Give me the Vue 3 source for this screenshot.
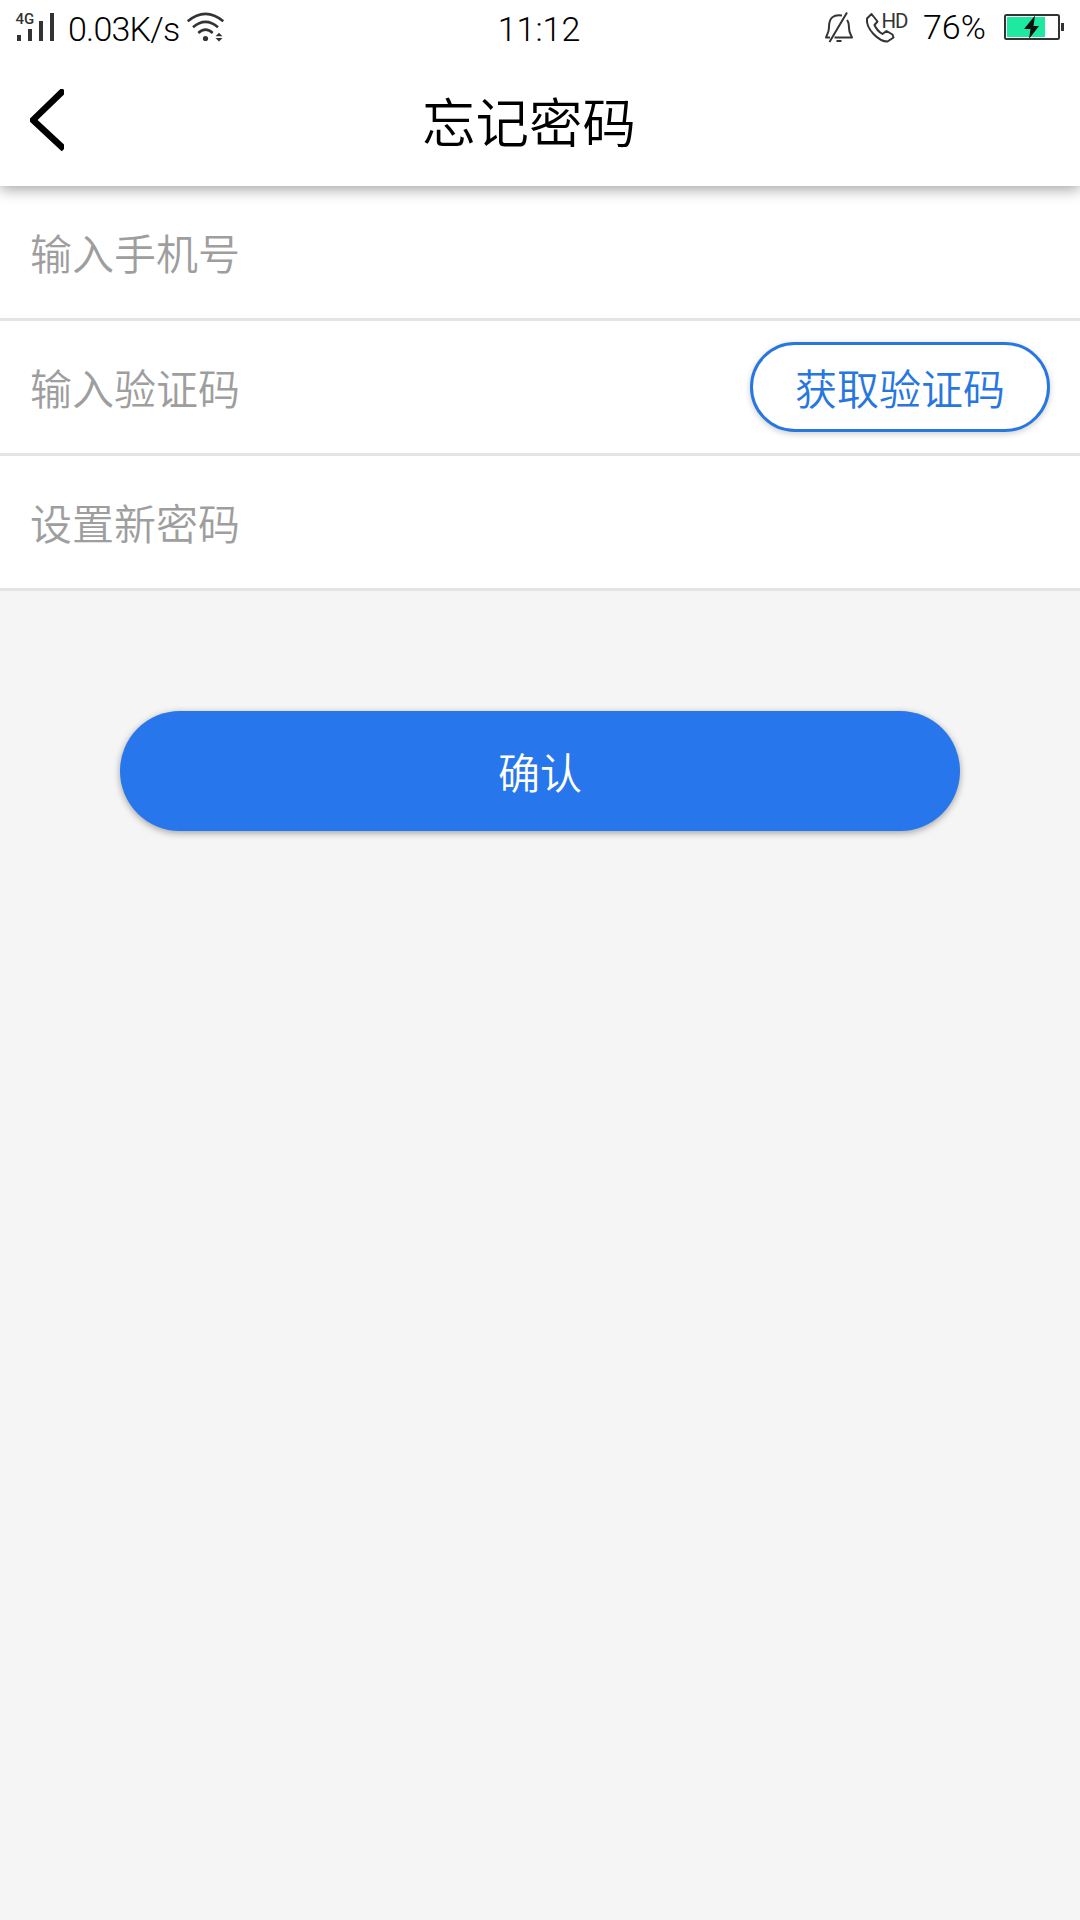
<script setup>
import { ref } from 'vue'

const phone = ref('')
const code = ref('')
const password = ref('')
</script>

<template>
  <div class="page">
    <header class="header">
      <div class="status-bar">
        <div class="status-left">
          <svg class="icon" width="44" height="60" viewBox="14 0 44 60">
            <text x="15.5" y="23.5" class="tiny network">4G</text>
            <path d="M17 35h4v6h-4zM28 29h4v12h-4zM39 21h4v20h-4zM50 13h4v28h-4z" fill="#333" />
          </svg>
          <span class="speed">0.03K/s</span>
          <svg class="icon" width="40" height="60" viewBox="186 0 40 60">
            <g fill="none" stroke="#333" stroke-width="2.5">
              <path d="M187.700 21.300Q205.500 6.500 223.300 21.300" />
              <path d="M193 27.200Q205.500 16.500 218 27.200" />
              <path d="M198.300 33Q205.500 26.300 212.700 33" />
            </g>
            <circle cx="205.500" cy="38.500" r="2.600" fill="#333" />
            <path d="M215.500 36.200l3.500-3.500 3.500 3.500zM215.500 38l3.500 3.500 3.500-3.500z" fill="#333" />
          </svg>
        </div>
        <span class="time">11:12</span>
        <div class="status-right">
          <svg class="icon" width="100" height="60" viewBox="820 0 100 60">
            <g fill="none" stroke="#333" stroke-width="2" stroke-linejoin="round">
              <path d="M842 15.500Q829 13.500 829 27C829 32 827.500 33.500 826 37.500H830" />
              <path d="M847 20Q849 22.500 849 28C849 32.500 850.500 34 852 37.500H834.500" />
              <path d="M829.500 42L847 12.500M836.500 41h5" />
              <path d="M871.500 14L867 18.500C865.500 29 879 41.500 887.500 41.500L893.500 37.500 892.500 34.500 886.500 31 882.500 34C879 32 876 28.500 874.500 25L877.500 21.500Z" />
            </g>
            <text x="881.5" y="27.500" class="tiny hd">HD</text>
          </svg>
          <span class="percent">76%</span>
          <svg class="icon" width="62" height="60" viewBox="1002 0 62 60">
            <rect x="1005" y="15" width="54" height="24" rx="1.500" fill="#fff" stroke="#333" stroke-width="2" />
            <path d="M1007 17h38v20h-38z" fill="#1de9a0" />
            <path d="M1035 15.500L1024 29H1030.500L1029 39 1039 26H1033.500Z" fill="#111" />
            <path d="M1061 23h3v8h-3z" fill="#333" />
          </svg>
        </div>
      </div>
      <div class="nav">
        <svg class="back" width="34" height="62" viewBox="0 0 34 62">
          <path d="M34 1L3 31l31 29" fill="none" stroke="#000" stroke-width="6.500" />
        </svg>
        <h1 class="title">忘记密码</h1>
      </div>
    </header>

    <main>
      <div class="row">
        <input v-model="phone" type="tel" placeholder="输入手机号" />
      </div>
      <div class="row">
        <input v-model="code" type="text" placeholder="输入验证码" />
        <button class="code-btn">获取验证码</button>
      </div>
      <div class="row">
        <input v-model="password" type="password" placeholder="设置新密码" />
      </div>
      <button class="confirm-btn">确认</button>
    </main>
  </div>
</template>

<style>
body {
  background: #f5f5f5;
}
</style>

<style scoped>
.page {
  min-height: 1920px;
  overflow: hidden;
  background: #f5f5f5;
  font-family: 'Noto Sans CJK SC', sans-serif;
}

.header {
  position: relative;
  z-index: 1;
  height: 186px;
  background: #fff;
  box-shadow: 0 3px 14px rgba(0, 0, 0, 0.38);
}

.status-bar {
  display: grid;
  grid-template-columns: 1fr auto 1fr;
  height: 60px;
  padding: 0 16px 0 14px;
  font-family: Roboto, sans-serif;
  font-size: 34px;
  font-weight: 350;
  line-height: 58px;
  color: #000;
}

.status-left,
.status-right {
  display: flex;
}

.status-right {
  justify-content: flex-end;
}

.icon {
  display: block;
  flex: none;
}

.tiny {
  font-family: Roboto, sans-serif;
  fill: #333;
}

.network {
  font-size: 15px;
  font-weight: 500;
}

.hd {
  font-size: 20.5px;
  font-weight: 400;
  letter-spacing: -1px;
}

.speed {
  width: 117px;
  margin-left: 10px;
  margin-right: 1px;
  letter-spacing: -0.8px;
}

.time {
  line-height: 59px;
}

.percent {
  width: 79px;
  margin-left: 3px;
  line-height: 55px;
}

.nav {
  display: flex;
  align-items: center;
  height: 126px;
  padding-left: 30px;
}

.back {
  flex: none;
  margin-bottom: 6px;
}

.title {
  margin: 0 0 6px 358px;
  font-size: 53.5px;
  font-weight: 350;
  line-height: 80px;
  color: #000;
}

.row {
  display: flex;
  align-items: center;
  box-sizing: border-box;
  height: 135px;
  padding: 0 30px;
  background: #fff;
  border-bottom: 3px solid #e4e4e4;
}

input {
  flex: 1;
  min-width: 0;
  height: 90px;
  padding: 0 0 1px;
  box-sizing: border-box;
  border: none;
  outline: none;
  background: transparent;
  font-family: inherit;
  font-size: 42px;
  font-weight: 350;
  color: #333;
}

input::placeholder {
  color: #9e9e9e;
  opacity: 1;
}

button {
  font-family: inherit;
  font-size: 42px;
  font-weight: 350;
}

.code-btn {
  width: 300px;
  height: 90px;
  padding: 0 0 1px;
  border: 3px solid #2876e0;
  border-radius: 45px;
  background: #fff;
  color: #2876e0;
  box-shadow: 0 2px 6px rgba(0, 0, 0, 0.2);
}

.confirm-btn {
  display: block;
  width: 840px;
  height: 120px;
  margin: 120px auto 0;
  padding: 0 0 1px;
  border: none;
  border-radius: 60px;
  background: #2876ec;
  color: #fff;
  box-shadow: 0 2px 7px rgba(0, 0, 0, 0.35);
}
</style>
